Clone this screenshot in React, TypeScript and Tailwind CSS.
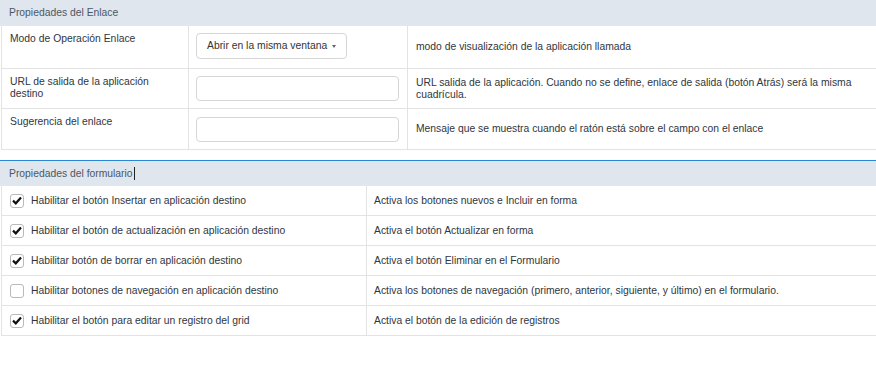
import React from "react"

const linkRows = [
  { label: "Modo de Operación Enlace", kind: "select", help: "modo de visualización de la aplicación llamada", h: "h-[43px]" },
  {
    label: "URL de salida de la aplicación destino",
    kind: "input",
    help: "URL salida de la aplicación. Cuando no se define, enlace de salida (botón Atrás) será la misma cuadrícula.",
    h: "h-[40px]",
  },
  {
    label: "Sugerencia del enlace",
    kind: "input",
    help: "Mensaje que se muestra cuando el ratón está sobre el campo con el enlace",
    h: "h-[41px]",
  },
]

const formRows = [
  { label: "Habilitar el botón Insertar en aplicación destino", checked: true, help: "Activa los botones nuevos e Incluir en forma" },
  { label: "Habilitar el botón de actualización en aplicación destino", checked: true, help: "Activa el botón Actualizar en forma" },
  { label: "Habilitar botón de borrar en aplicación destino", checked: true, help: "Activa el botón Eliminar en el Formulario" },
  {
    label: "Habilitar botones de navegación en aplicación destino",
    checked: false,
    help: "Activa los botones de navegación (primero, anterior, siguiente, y último) en el formulario.",
  },
  { label: "Habilitar el botón para editar un registro del grid", checked: true, help: "Activa el botón de la edición de registros" },
]

// small bootstrap-like checkbox
function Check({ checked }: { checked: boolean }) {
  return (
    <span className="w-[14px] h-[14px] shrink-0 rounded-[3px] border border-[#b9b9b9] bg-white flex items-center justify-center">
      {checked && (
        <svg width="10" height="9" viewBox="0 0 10 9">
          <path d="M1 4.6 L3.8 7.3 L9 1.6" fill="none" stroke="#111" strokeWidth="2.2" strokeLinejoin="miter" />
        </svg>
      )}
    </span>
  )
}

export default function App() {
  return (
    <div className="w-[876px] h-[365px] bg-white font-['Liberation_Sans',Arial,sans-serif] text-[10.35px] text-[#2f3640] overflow-hidden">
      {/* Link properties */}
      <div className="h-[26px] bg-[#dfe6ee] flex items-center px-[9px] text-[#4c5764]">Propiedades del Enlace</div>
      <div className="ml-px border-l border-[#e3e3e3]">
        {linkRows.map((r) => (
          <div key={r.label} className={`grid grid-cols-[187px_219px_1fr] border-b border-[#e3e3e3] ${r.h}`}>
            <div className="border-r border-[#e3e3e3] px-[8px] pt-[7px] leading-[12px]">{r.label}</div>
            <div className="border-r border-[#e3e3e3] pl-[7px] pr-[7px] flex items-center">
              {r.kind === "select" ? (
                <div className="w-[151px] h-[26px] -mt-[2px] border border-[#d6d6d6] rounded-[4px] flex items-center justify-between pl-[10px] pr-[10px] text-[#333] whitespace-nowrap">
                  <span>Abrir en la misma ventana</span>
                  <span className="w-0 h-0 border-l-[2.5px] border-r-[2.5px] border-t-[3px] border-l-transparent border-r-transparent border-t-[#666]" />
                </div>
              ) : (
                <div className="w-[203px] h-[25px] border border-[#d6d6d6] rounded-[4px] bg-white" />
              )}
            </div>
            <div className="px-[8px] flex items-center leading-[12px]">{r.help}</div>
          </div>
        ))}
      </div>

      {/* Form properties */}
      <div className="mt-[10px] border-t border-[#2a87d6]">
        <div className="h-[25px] bg-[#dfe6ee] flex items-center px-[9px] text-[#4c5764]">
          Propiedades del formulario
          <span className="inline-block w-px h-[13px] bg-[#222] ml-px" />
        </div>
        <div className="ml-px border-l border-[#e3e3e3]">
          {formRows.map((r) => (
            <div key={r.label} className="grid grid-cols-[365px_1fr] h-[30px] border-b border-[#e3e3e3]">
              <div className="border-r border-[#e3e3e3] pl-[8px] flex items-center gap-[7px]">
                <Check checked={r.checked} />
                <span>{r.label}</span>
              </div>
              <div className="px-[7px] flex items-center">{r.help}</div>
            </div>
          ))}
        </div>
      </div>
    </div>
  )
}
